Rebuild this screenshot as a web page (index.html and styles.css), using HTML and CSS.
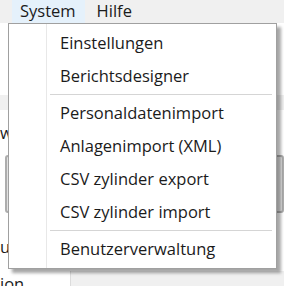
FILE: index.html
```html
<!DOCTYPE html>
<html lang="de">
<head>
    <meta charset="UTF-8">
    <title>System Menü</title>
    <link rel="stylesheet" href="styles.css">
</head>
<body>
    <!-- Main menu bar -->
    <div class="menubar">
        <span class="menubar-item open">System</span>
        <span class="menubar-item">Hilfe</span>
    </div>

    <!-- Window content behind the menu -->
    <div class="workspace">
        <div class="ws-blank"></div>
        <div class="ws-band"></div>
        <div class="ws-label">wählen</div>
        <div class="ws-button-row">
            <div class="ws-button"></div>
        </div>
        <div class="ws-label ws-label-low">uchen</div>
        <div class="ws-footer">
            <div class="ws-footer-left">ion</div>
            <div class="ws-footer-right"></div>
        </div>
    </div>

    <!-- Open dropdown of "System" -->
    <div class="dropdown">
        <div class="menu-item">Einstellungen</div>
        <div class="menu-item">Berichtsdesigner</div>
        <div class="menu-sep"></div>
        <div class="menu-item">Personaldatenimport</div>
        <div class="menu-item">Anlagenimport (XML)</div>
        <div class="menu-item">CSV zylinder export</div>
        <div class="menu-item">CSV zylinder import</div>
        <div class="menu-sep"></div>
        <div class="menu-item">Benutzerverwaltung</div>
    </div>
</body>
</html>
```

FILE: styles.css
```css
/* Page */
body {
    margin: 0;
    padding: 0;
    overflow: hidden;
    background: #ffffff;
    font-family: "Open Sans", "Noto Sans", sans-serif;
    font-size: 16.5px;
    color: #1b1b1b;
}

/* Menu bar */
.menubar {
    display: flex;
    gap: 4px;
    height: 23px;
    padding-left: 12px;
    background: #f0f0f0;
}

.menubar-item {
    padding: 0 9px 0 8px;
    line-height: 22px;
}

.menubar-item.open {
    background: #e5f1fb;
}

/* Content of the window behind the menu */
.workspace {
    display: flex;
    flex-direction: column;
    height: 263px;
}

.workspace > div {
    flex-shrink: 0;
}

.ws-blank {
    height: 72px;
}

.ws-band {
    height: 15px;
    background: #f0f0f0;
}

.ws-label {
    height: 45px;
    line-height: 45px;
    white-space: nowrap;
}

.ws-label-low {
    height: 56px;
    line-height: 64px;
}

.ws-button-row {
    height: 60px;
    padding-left: 5px;
}

.ws-button {
    height: 54px;
    border: 2px solid #adadad;
    border-radius: 3px;
    background: #e1e1e1;
}

.ws-footer {
    display: flex;
    height: 15px;
}

.ws-footer-left {
    width: 70px;
    border-right: 1px solid #dcdcdc;
    line-height: 26px;
}

.ws-footer-right {
    flex: 1;
    background: #f0f0f0;
}

/* Dropdown menu */
.dropdown {
    position: absolute;
    left: 8px;
    top: 23px;
    width: 269px;
    box-sizing: border-box;
    padding: 3px 0 2px;
    border: 1px solid #a0a0a0;
    background-color: #ffffff;
    background-image: linear-gradient(to right, transparent 37px, #e8e8e8 37px, #e8e8e8 38px, transparent 38px);
    box-shadow: 4px 4px 3px rgba(0, 0, 0, 0.35);
}

.menu-item {
    height: 33px;
    line-height: 31px;
    padding-left: 51px;
    white-space: nowrap;
}

.menu-sep {
    height: 1px;
    margin: 1px 4px 2px 41px;
    background: #d5d5d5;
}
```
